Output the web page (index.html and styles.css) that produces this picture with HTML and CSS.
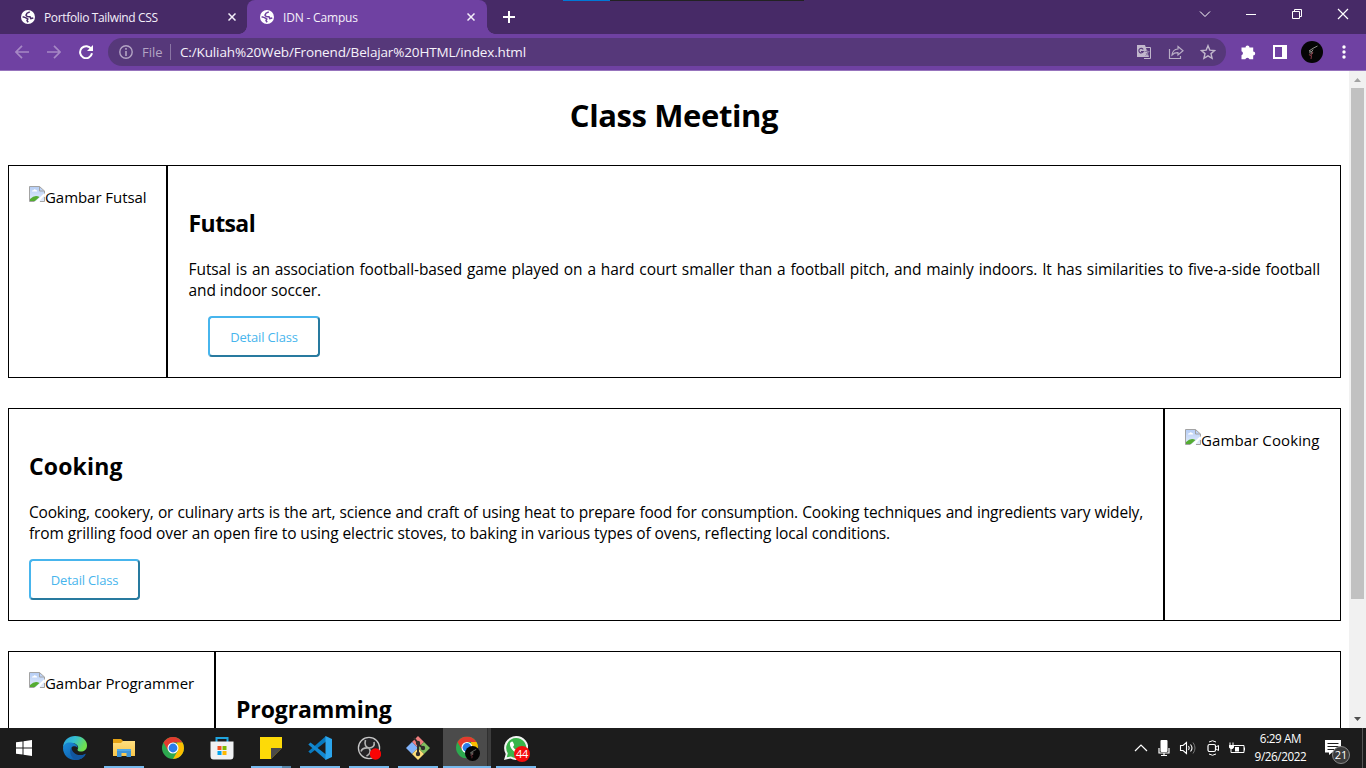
FILE: index.html
```html
<!DOCTYPE html>
<html lang="en">
<head>
<meta charset="utf-8">
<title>IDN - Campus</title>
<link rel="stylesheet" href="styles.css">
</head>
<body>
<svg class="defs" width="0" height="0">
  <defs>
    <linearGradient id="edge-top" x1="0" y1="0" x2="1" y2="0.4"><stop offset="0" stop-color="#2a9fe0"/><stop offset=".5" stop-color="#35bfd0"/><stop offset="1" stop-color="#6fe04e"/></linearGradient>
    <linearGradient id="edge-low" x1="0" y1="0" x2="1" y2="1"><stop offset="0" stop-color="#1b8fdc"/><stop offset="1" stop-color="#0b4f9c"/></linearGradient>
    <linearGradient id="folder" x1="0" y1="0" x2="0" y2="1"><stop offset="0" stop-color="#ffdf80"/><stop offset="1" stop-color="#f8c64a"/></linearGradient>
    <linearGradient id="sky" x1="0" y1="0" x2="0" y2="1"><stop offset="0" stop-color="#b5cdf5"/><stop offset="1" stop-color="#e4edfc"/></linearGradient>
    <symbol id="globe" viewBox="0 0 14 14"><circle cx="7" cy="7" r="7" fill="#fff"/><path d="M8.800 1.800 6 3.200 5 5.200 6.200 6.600 9 6.800 9.800 8.600 12.300 8M1.600 6.800 4.500 7.600 6.800 9 6 10.600 7.200 12.300" fill="none" stroke="currentColor" stroke-width="1.500"/></symbol>
    <symbol id="cross" viewBox="0 0 8 8"><path d="M.5.5l7 7M7.500.5l-7 7" stroke="#f4effa" stroke-width="1.500"/></symbol>
    <symbol id="chrome" viewBox="0 0 22 22"><circle cx="11" cy="11" r="11" fill="#2da94f"/><path d="M1.500 5.500A11 11 0 0 1 20.500 5.500H11L6.200 13.700z" fill="#e33b2e"/><path d="M20.500 5.500A11 11 0 0 1 11 22l4.800-8.300L15 5.500z" fill="#fdbd00"/><circle cx="11" cy="11" r="5.500" fill="#fff"/><circle cx="11" cy="11" r="4.400" fill="#2b7de9"/></symbol>
    <symbol id="avatar" viewBox="0 0 22 22"><circle cx="11" cy="11" r="11" fill="#050505"/><path d="M16.500 5 12 7.300 8 10l3 .5 1-2M10 10l1.500 2.500-3.300-.8" fill="none" stroke="#8e8e88"/><path d="M8 13.500l2.500 1.500-.5 3M12 11l-2 3" fill="none" stroke="#7d3540" stroke-width="1.100"/></symbol>
    <symbol id="broken" viewBox="0 0 16 16"><path d="M.5.5h10l5 5v10H.5z" fill="url(#sky)"/><path d="M3 5.500q0-1.500 1.500-1.300Q5.500 2.500 7 4q1.500 0 1.200 1.500z" fill="#fff"/><path d="M1 15v-2q5-5 9.500-2L6 15z" fill="#54ac32"/><path d="M15.500 7v2.500L9.500 16H6z" fill="#fff"/><path d="M5.500 15.500H.5V.5h10l5 4.500v2.500M10.500.5v4.500h5M11 15.500h4.500V11" fill="none" stroke="#a3a3a3"/></symbol>
  </defs>
</svg>

<header class="tabstrip">
  <div class="tab"><svg class="favicon"><use href="#globe"/></svg><span class="tab-title first-title">Portfolio Tailwind CSS</span><svg class="close"><use href="#cross"/></svg></div>
  <div class="tab active"><svg class="favicon"><use href="#globe"/></svg><span class="tab-title">IDN - Campus</span><svg class="close"><use href="#cross"/></svg></div>
  <svg class="plus" viewBox="0 0 12 12"><path d="M6 0v12M0 6h12" stroke="#fff" stroke-width="2"/></svg>
  <div class="window-controls">
    <svg width="12" height="12" viewBox="0 0 12 12"><path d="M1 3.500l5 5 5-5" fill="none" stroke="#fff"/></svg>
    <svg width="12" height="12" viewBox="0 0 12 12"><path d="M1 6.500h10" stroke="#fff"/></svg>
    <svg width="12" height="12" viewBox="0 0 12 12"><path d="M1.500 3.500h7v7h-7zM3.500 3V1.500h7v7H9" fill="none" stroke="#fff"/></svg>
    <svg width="12" height="12" viewBox="0 0 12 12"><path d="M1 1l10 10M11 1L1 11" stroke="#fff" stroke-width="1.200"/></svg>
  </div>
  <div class="top-strip"></div>
</header>

<nav class="toolbar">
  <svg class="nav-icon" viewBox="0 0 14 14"><path d="M14 7H1M7 .8.900 7 7 13.200" fill="none" stroke="#a688c5" stroke-width="1.700"/></svg>
  <svg class="nav-icon" viewBox="0 0 14 14"><path d="M0 7h13M7 .8 13.100 7 7 13.200" fill="none" stroke="#a688c5" stroke-width="1.700"/></svg>
  <svg class="nav-icon" viewBox="0 0 14 14"><path d="M12.300 4.200A6 6 0 1 0 13 8.300" fill="none" stroke="#fff" stroke-width="2"/><path d="M14 0v6H8z" fill="#fff"/></svg>
  <div class="omnibox">
    <svg width="14" height="14" viewBox="0 0 14 14"><circle cx="7" cy="7" r="6.200" fill="none" stroke="#b3a4c4" stroke-width="1.400"/><path d="M7 3v1.700M7 6v5" stroke="#b3a4c4" stroke-width="1.600"/></svg>
    <span class="scheme">File</span><span class="rule"></span><span class="url">C:/Kuliah%20Web/Fronend/Belajar%20HTML/index.html</span>
    <div class="page-actions">
      <svg width="16" height="16" viewBox="0 0 16 16"><path d="M1 1h8l4 12H1z" fill="#c1b7cc"/><path d="M9 3.500h5.500v11H8" fill="none" stroke="#c1b7cc"/><path d="M7.200 5.500A2.300 2.300 0 1 0 7.300 7.500H5" fill="none" stroke="#56387a" stroke-width="1.100"/><path d="M8.500 7.500h5M11 6v1.500M12.500 7.500q-.5 3-3 4M10 9q1 2 3 3" fill="none" stroke="#8d7ba4" stroke-width="1"/></svg>
      <svg width="16" height="16" viewBox="0 0 16 16"><path d="M1.500 5v9.500h11V12M10 2.500l5 4.300-5 4.200V8.700Q6.500 8.500 4 11 4.500 5.500 10 5z" fill="none" stroke="#b8adc5" stroke-width="1.200"/></svg>
      <svg width="16" height="16" viewBox="0 0 16 16"><path d="M8 1.700l1.800 4.400 4.800.4-3.600 3.100 1.100 4.700L8 11.800l-4.100 2.500L5 9.600 1.400 6.500l4.800-.4z" fill="none" stroke="#c1b7cc" stroke-width="1.400"/></svg>
    </div>
  </div>
  <div class="extensions">
    <svg width="16" height="16" viewBox="0 0 16 16"><path d="M1.500 3.500h4a2 2 0 1 1 4 0h3.700v4a2 2 0 1 1 0 4v3.700H9.500a2.200 2.200 0 0 0-4.200 0H1.500v-4a2.100 2.100 0 0 0 0-4z" fill="#fff"/></svg>
    <svg width="16" height="16" viewBox="0 0 16 16"><path d="M1 1h14v14H1zM3 3v10h7V3z" fill="#fff" fill-rule="evenodd"/></svg>
    <svg width="22" height="22"><use href="#avatar"/></svg>
    <svg class="more" width="4" height="14" viewBox="0 0 4 14"><circle cx="2" cy="2" r="1.700" fill="#fff"/><circle cx="2" cy="7" r="1.700" fill="#fff"/><circle cx="2" cy="12" r="1.700" fill="#fff"/></svg>
  </div>
</nav>

<div class="viewport">
  <main class="page">
    <h1>Class Meeting</h1>
    <article class="card">
      <section class="picture futsal"><svg class="broken"><use href="#broken"/></svg><span>Gambar Futsal</span></section>
      <section class="detail futsal-detail">
        <h2>Futsal</h2>
        <p><span class="line full">Futsal is an association football-based game played on a hard court smaller than a football pitch, and mainly indoors. It has similarities to five-a-side football</span><span class="line">and indoor soccer.</span></p>
        <button class="indented">Detail Class</button>
      </section>
    </article>
    <article class="card">
      <section class="detail">
        <h2 class="wide">Cooking</h2>
        <p><span class="line full tight">Cooking, cookery, or culinary arts is the art, science and craft of using heat to prepare food for consumption. Cooking techniques and ingredients vary widely,</span><span class="line">from grilling food over an open fire to using electric stoves, to baking in various types of ovens, reflecting local conditions.</span></p>
        <button>Detail Class</button>
      </section>
      <section class="picture cooking"><svg class="broken"><use href="#broken"/></svg><span>Gambar Cooking</span></section>
    </article>
    <article class="card">
      <section class="picture programmer"><svg class="broken"><use href="#broken"/></svg><span>Gambar Programmer</span></section>
      <section class="detail"><h2 class="programming">Programming</h2></section>
    </article>
  </main>
  <aside class="scrollbar">
    <svg width="17" height="17" viewBox="0 0 17 17"><path d="M5 11l3.500-4 3.500 4z" fill="#a3a3a3"/></svg>
    <div class="thumb"></div>
    <svg width="17" height="17" viewBox="0 0 17 17"><path d="M5 6l3.500 4L12 6z" fill="#505050"/></svg>
  </aside>
</div>

<footer class="taskbar">
  <div class="start"><svg width="16" height="16" viewBox="0 0 16 16"><path d="M0 2.300 6.500 1.400v6.100H0zM7.500 1.200 16 0v7.500H7.500zM0 8.500h6.500v6.100L0 13.700zM7.500 8.500H16V16l-8.500-1.200z" fill="#fff"/></svg></div>
  <div class="app"><svg width="24" height="24" viewBox="0 0 24 24"><path d="M0 12C0 4 6 0 12 0c8 0 12 5 12 9.500 0 4-3 6-6 6-3.500 0-4-1.700-3-3C16 10 13 6.500 8 7 4 7.500 0 10 0 12z" fill="url(#edge-top)"/><path d="M0 12c.4-4 4-6 8-5.500 4 .3 7 3 6.600 5.500-1-2.200-5-2.500-6-.5-2 4 2 9 8 8.500 3-.2 5-1.700 6-1.500C21 21.500 17.500 24 12 24 5 24 0 18.500 0 12z" fill="url(#edge-low)"/><path d="M8.500 11.500C6 14 7 21.500 12.500 24c4.500 0 8-2 10-5.500.4-.8 0-1-.7-.6-6.800 3.300-13-.9-13.300-6.400z" fill="#12569f"/></svg></div>
  <div class="app running"><svg width="22" height="20" viewBox="0 0 22 20"><path d="M0 1h8l2 2h11.500v4H0z" fill="#e4a215"/><path d="M0 5h8l2-2h12v15H0z" fill="url(#folder)"/><path d="M4 19v-8h14v8h-4.500v-4h-5v4z" fill="#3d94d6"/><path d="M4 11h14v2H4z" fill="#52a9e5"/></svg></div>
  <div class="app"><svg width="22" height="22"><use href="#chrome"/></svg></div>
  <div class="app"><svg width="24" height="24" viewBox="0 0 24 24"><path d="M6.500 6V2h11v4" fill="none" stroke="#20a4de" stroke-width="2"/><path d="M.5 5.500h23V20q0 3.500-3 3.500h-17q-3 0-3-3.500z" fill="#f0f1f3"/><path d="M7.500 10h4v4h-4z" fill="#f25022"/><path d="M12.500 10h4v4h-4z" fill="#7fba00"/><path d="M7.500 15h4v4h-4z" fill="#00a4ef"/><path d="M12.500 15h4v4h-4z" fill="#ffb900"/></svg></div>
  <div class="app running stacked"><svg width="22" height="22" viewBox="0 0 22 22"><path d="M0 0h22v22H0z" fill="#fdda08"/><path d="M11 11h11L11 22z" fill="#4a4a4a"/><path d="M22 11v11H11z" fill="#1c1c1c"/></svg></div>
  <div class="app running"><svg width="24" height="24" viewBox="0 0 24 24"><path d="M18 5.500 2.500 17.500.3 15.500 18 0z" fill="#0879be"/><path d="M.3 8.500l2.200-2L18 18.500V24z" fill="#1388d0"/><path d="M17.500 0 24 3v18l-6.500 3z" fill="#2ba5ec"/></svg></div>
  <div class="app running"><svg width="24" height="24" viewBox="0 0 24 24"><circle cx="12" cy="12" r="10.600" fill="#252427" stroke="#c7c7c7" stroke-width="1.300"/><path d="M8.500 4C7 9 9 11.500 12 12c4 0 6-2.500 5-6M12 12c-3.500-.5-7 .5-8 3.500M12 12c2 3 1.500 6-2.500 8" fill="none" stroke="#b5b5b5" stroke-width="1.600"/><circle cx="18.500" cy="18" r="5.700" fill="#fb0404"/></svg></div>
  <div class="app running"><svg width="24" height="24" viewBox="0 0 24 24"><path d="M12 0l6 6-6 6-6-6z" fill="#ee7d7d"/><path d="M6 6l6 6-6 6-6-6z" fill="#81b3fa"/><path d="M18 6l6 6-6 6-6-6z" fill="#80be5f"/><path d="M12 12l6 6-6 6-6-6z" fill="#fbdd78"/><path d="M8 2l4 5v11M12 8l5 4" stroke="#302d2b" stroke-width="2" fill="none"/><circle cx="12" cy="7" r="2.200" fill="#302d2b"/><circle cx="17" cy="12" r="2.200" fill="#302d2b"/><circle cx="12" cy="18" r="2.200" fill="#302d2b"/></svg></div>
  <div class="app running current"><svg width="26" height="26" viewBox="0 0 26 26"><use href="#chrome" x="2" y="1.500" width="22" height="22"/><use href="#avatar" x="11" y="11" width="15" height="15"/></svg></div>
  <div class="app running"><svg width="24" height="24" viewBox="0 0 24 24"><path d="M12 0a12 12 0 1 1-5.500 22.500L0 24l1.700-6A12 12 0 0 1 12 0z" fill="#f2f4f2"/><path d="M12 2a10 10 0 1 1-5 18.500L2.800 21.300l1-4A10 10 0 0 1 12 2z" fill="#39b54a"/><path d="M7 6q1.500-1 2.200.5l1 2.500-1.200 2q2 3 4 3.500l2-1.500 3 1.500q0 3-3.500 3C10 17 5 11 6 7z" fill="#fff"/></svg><span class="badge">44</span></div>
  <div class="tray">
    <svg width="14" height="14" viewBox="0 0 14 14"><path d="M1 10l6-6 6 6" fill="none" stroke="#fff" stroke-width="1.200"/></svg>
    <svg width="14" height="18" viewBox="0 0 14 18"><rect x="3.500" y="1" width="7" height="12" rx="1" fill="#fff"/><path d="M2 9v5h10V9M7 13.500V17M4 16.500h6" fill="none" stroke="#fff" stroke-width="1.200"/></svg>
    <svg width="18" height="16" viewBox="0 0 18 16"><path d="M1.500 5.500h2.500l3.500-3v11l-3.500-3H1.500zM9.500 6q1.500 2 0 4M11.500 4.500q3 3.500 0 7" fill="none" stroke="#fff" stroke-width="1.100"/><path d="M14 2.500q4 5.500 0 11" fill="none" stroke="#777"/></svg>
    <svg width="14" height="18" viewBox="0 0 14 18"><rect x="2" y="5.500" width="7.500" height="7" rx="1.500" fill="none" stroke="#fff" stroke-width="1.200"/><path d="M10 8l2.500-1.500v5L10 10M3 3q3.500-2.500 7 0M3 15q3.500 2.500 7 0" fill="none" stroke="#fff"/></svg>
    <svg width="18" height="14" viewBox="0 0 18 14"><path d="M5.500 4.500H16v7H5.500M16.500 6.500v3M3 8v3.500h3M2 1.500V4M5 1.500V4" fill="none" stroke="#fff"/><path d="M1 4h5v2.500L4.500 8h-2L1 6.500zM7 6h4v4.500H7z" fill="#fff"/></svg>
  </div>
  <div class="clock"><span class="time">6:29 AM</span><span class="date">9/26/2022</span></div>
  <div class="notice"><svg width="16" height="16" viewBox="0 0 16 16"><path d="M0 0h16v12.500H7L4 15v-2.500H0z" fill="#fff"/><path d="M2.500 3.500h11M2.500 6.500h11M2.500 9.500h7" stroke="#1c1c1c"/></svg><span class="count">21</span></div>
  <div class="desktop-edge"></div>
</footer>
</body>
</html>
```
FILE: styles.css
```css
* { box-sizing: border-box; }
body {
  margin: 0;
  width: 1366px;
  height: 768px;
  overflow: hidden;
  display: flex;
  flex-direction: column;
  background: #fff;
  color: #000;
  font-family: "Open Sans", "Noto Sans", sans-serif;
}
svg { display: block; flex: none; }
.defs { position: absolute; }

/* Tab strip */
.tabstrip { position: relative; height: 34px; flex: none; display: flex; background: #472a67; }
.tab { width: 247px; height: 34px; display: flex; align-items: center; padding: 0 11px 0 21px; color: #472a67; background: #472a67; }
.tab.active { position: relative; width: 240px; background: #6f41a2; border-radius: 8px 8px 0 0; padding: 0 12px 0 13px; color: #6f41a2; }
.tab.active::before, .tab.active::after { content: ""; position: absolute; bottom: 0; width: 8px; height: 8px; }
.tab.active::before { left: -8px; background: radial-gradient(circle at 0 0, transparent 7.500px, #6f41a2 8px); }
.tab.active::after { right: -8px; background: radial-gradient(circle at 100% 0, transparent 7.500px, #6f41a2 8px); }
.favicon { width: 14px; height: 14px; margin-right: 9px; }
.tab-title { flex: 1; color: #f4effa; font-size: 12px; letter-spacing: -0.180px; white-space: nowrap; }
.first-title { letter-spacing: -0.350px; }
.close { width: 8px; height: 8px; }
.plus { width: 12px; height: 12px; margin: 11px 0 0 16px; }
.window-controls { margin-left: auto; display: flex; gap: 34px; padding: 8px 17px 0 0; }
.top-strip { position: absolute; left: 563px; top: 0; width: 241px; height: 1px; background: linear-gradient(90deg, #0078d7 47px, #222 47px); }

/* Address toolbar */
.toolbar { height: 37px; flex: none; display: flex; align-items: center; padding: 0 20px 1px 15px; background: #6f41a2; border-bottom: 1px solid #9774bd; }
.nav-icon { width: 14px; height: 14px; margin-right: 18px; }
.omnibox { width: 1118px; height: 28px; margin-left: -3px; border-radius: 14px; background: #56387a; display: flex; align-items: center; padding: 0 10px 0 11px; font-size: 13px; color: #f6f2fa; }
.scheme { margin-left: 9px; width: 28px; color: #b3a4c4; }
.rule { width: 1px; height: 16px; background: #8a75a4; margin-right: 9px; }
.url { white-space: nowrap; font-size: 13.500px; letter-spacing: -0.140px; }
.page-actions { margin-left: auto; display: flex; gap: 16px; }
.extensions { flex: 1; display: flex; align-items: center; padding-left: 14px; gap: 16px; }
.extensions svg:nth-child(3) { margin-left: -3px; }
.more { margin-left: auto; }

/* Page */
.viewport { height: 657px; flex: none; display: flex; overflow: hidden; }
.page { width: 1349px; padding: 23px 8px 0; }
h1 { margin: 0 0 28px; padding-right: 1px; font-size: 31px; line-height: 43px; text-align: center; letter-spacing: -0.400px; }
.card { display: flex; height: 213px; margin-bottom: 30px; }
.picture { flex: none; display: flex; border: 1px solid #000; padding: 20px 0 0 20px; font-size: 15px; line-height: 22px; white-space: nowrap; letter-spacing: -0.100px; }
.futsal { width: 159px; letter-spacing: -0.050px; }
.cooking { width: 177px; letter-spacing: 0.100px; }
.programmer { width: 207px; letter-spacing: -0.040px; }
.broken { width: 16px; height: 16px; }
.detail { flex: 1; min-width: 0; border: 1px solid #000; padding: 41px 20px 0; }
.futsal-detail { padding-left: 20.600px; }
h2 { margin: 0; font-size: 23px; line-height: 32px; letter-spacing: -0.600px; }
.wide { letter-spacing: 0.150px; }
.programming { letter-spacing: -0.100px; }
p { margin: 20px 0 15px; font-size: 15.500px; line-height: 21px; letter-spacing: -0.100px; }
.line { display: block; white-space: nowrap; }
.full { white-space: normal; height: 21px; text-align: justify; text-align-last: justify; }
.tight { letter-spacing: -0.200px; }
button { display: block; width: 111px; height: 41px; padding: 0; border: 2px solid; border-color: #47b5ed #287a9f #287a9f #47b5ed; border-radius: 4px; background: #fff; color: #47b5ed; font: 13px "Open Sans", "Noto Sans", sans-serif; letter-spacing: -0.180px; }
.indented { width: 112px; margin-left: 19.400px; }
.scrollbar { width: 17px; display: flex; flex-direction: column; background: #f1f1f1; }
.thumb { height: 511px; margin: 0 2px auto; background: #c1c1c1; }

/* Taskbar */
.taskbar { height: 40px; flex: none; display: flex; background: #1c1c1c; color: #fff; }
.start { width: 50px; display: flex; align-items: center; padding-left: 16px; }
.app { position: relative; width: 49px; display: flex; align-items: center; justify-content: center; }
.running::after { content: ""; position: absolute; left: 5px; bottom: 0; width: 40px; height: 2px; background: #76b9ed; }
.stacked::after { background: linear-gradient(90deg, #76b9ed 31px, #5685a9 31px); }
.current { background: linear-gradient(90deg, #1c1c1c 1px, #4b4b4b 1px, #4b4b4b 45px, #303030 45px, #303030 46px, #3d3d3d 46px); }
.current::after { left: 1px; width: 48px; }
.badge { position: absolute; left: 23px; top: 18px; width: 16px; height: 16px; border-radius: 50%; background: #f50c0c; font-size: 11px; line-height: 16px; text-align: center; letter-spacing: -0.300px; }
.tray { margin-left: auto; display: flex; align-items: center; gap: 8.500px; }
.clock { width: 69px; display: flex; flex-direction: column; align-items: center; font-size: 11.700px; line-height: 18px; padding-top: 1px; letter-spacing: -0.400px; }
.notice { position: relative; width: 47px; padding: 12px 0 0 10px; }
.count { position: absolute; left: 17px; top: 18px; width: 18px; height: 18px; border: 1px solid #8a8a8a; border-radius: 50%; background: #3b3b3b; font-size: 11px; line-height: 16px; text-align: center; }
.desktop-edge { width: 4px; border-left: 1px solid #555; }
```
